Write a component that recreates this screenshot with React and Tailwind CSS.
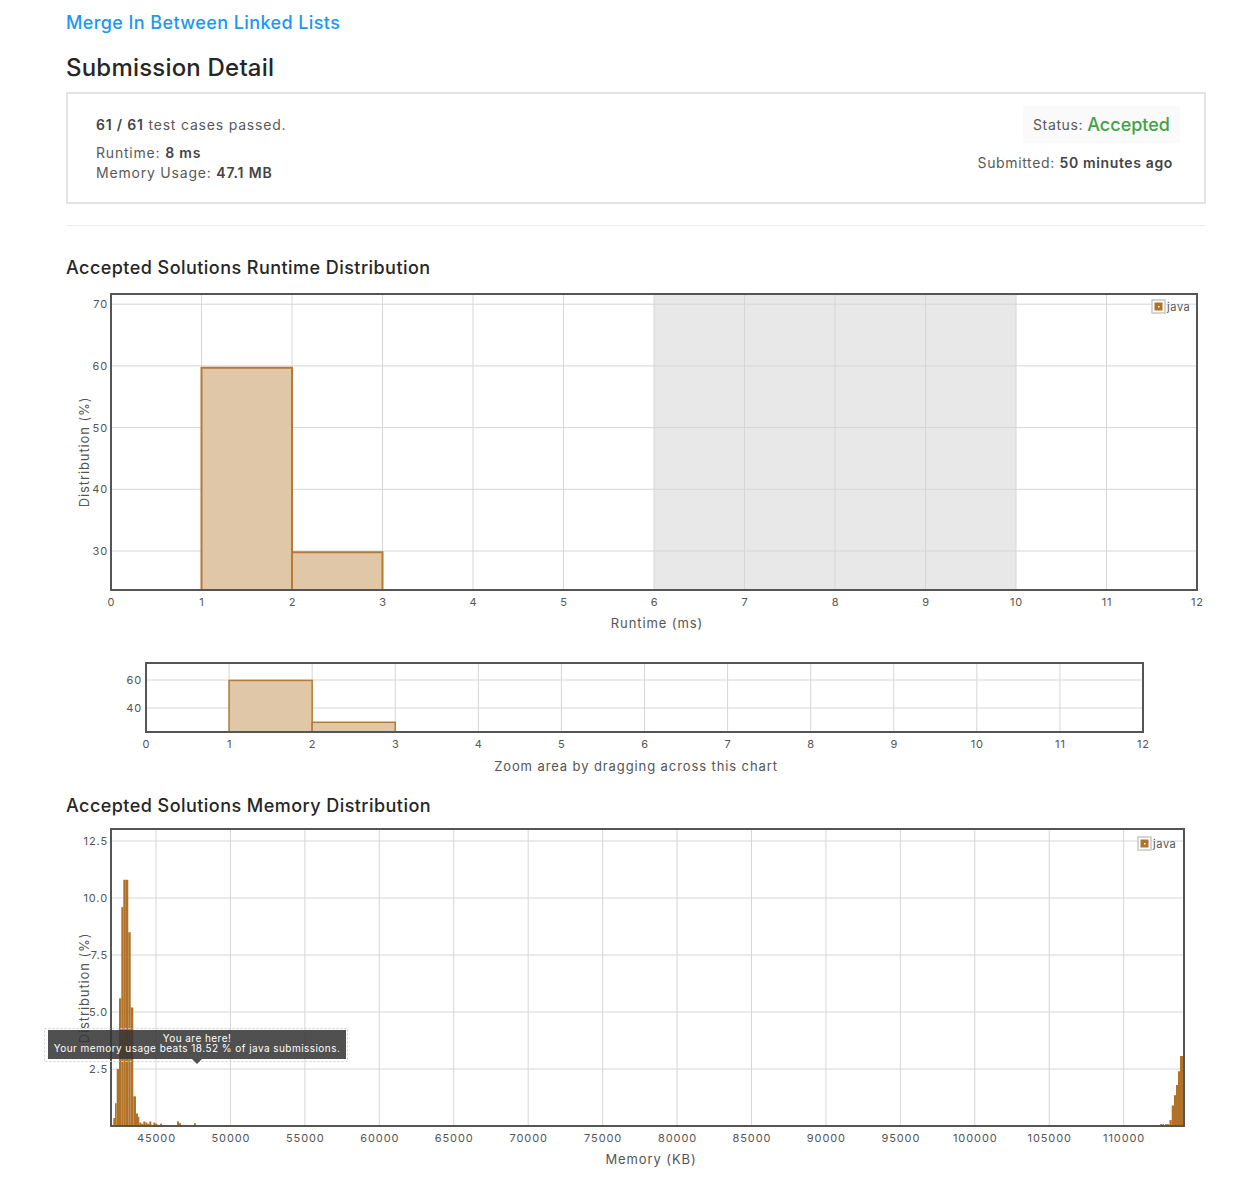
const FONT = "Inter, 'Liberation Sans', sans-serif";
const GRID = "#d6d6d6";
const FRAME = "#555555";
const LABEL = "#555555";
const BROWN = "#b07228";

const tick = { fontSize: 11, fill: LABEL, fontFamily: FONT, letterSpacing: 0.9 };
const axis = { fontSize: 13, fill: LABEL, fontFamily: FONT, letterSpacing: 0.9 };

function Legend({ x, y }) {
  return (
    <g>
      <rect x={x} y={y} width={13} height={13} fill="#fff" stroke="#c8c8c8" strokeWidth={1.5} />
      <rect x={x + 2.5} y={y + 2.5} width={8} height={8} fill={BROWN} />
      <rect x={x + 6} y={y + 6} width={1.5} height={1.5} fill="#fff" />
      <text x={x + 15} y={y + 10.5} {...tick} letterSpacing={0.6}>java</text>
    </g>
  );
}

function RuntimeChart() {
  const X0 = 111, X1 = 1197, Y0 = 294, Y1 = 590;
  const xs = (v) => X0 + v * ((X1 - X0) / 12);
  const ys = (v) => 551 - (v - 30) * 6.17;
  const bars = [[1, 2, 59.7], [2, 3, 29.8]];
  return (
    <svg width={1140} height={360} viewBox="66 280 1140 360" overflow="visible" className="block">
      <rect x={xs(6)} y={Y0} width={xs(10) - xs(6)} height={Y1 - Y0} fill="#e8e8e8" />
      {[30, 40, 50, 60, 70].map((v) => (
        <line key={v} x1={X0} x2={X1} y1={ys(v)} y2={ys(v)} stroke={GRID} />
      ))}
      {Array.from({ length: 11 }, (_, i) => i + 1).map((v) => (
        <line key={v} x1={xs(v)} x2={xs(v)} y1={Y0} y2={Y1} stroke={GRID} />
      ))}
      {bars.map(([a, b, h]) => (
        <rect key={a} x={xs(a)} y={ys(h)} width={xs(b) - xs(a)} height={Y1 - ys(h)} fill="#e0c7a8" stroke="#b87a33" strokeWidth={2} />
      ))}
      <rect x={X0} y={Y0} width={X1 - X0} height={Y1 - Y0} fill="none" stroke={FRAME} strokeWidth={2} />
      {[30, 40, 50, 60, 70].map((v) => (
        <text key={v} x={108} y={ys(v) + 4} textAnchor="end" {...tick}>{v}</text>
      ))}
      {Array.from({ length: 13 }, (_, i) => i).map((v) => (
        <text key={v} x={xs(v) + 0.5} y={606} textAnchor="middle" {...tick}>{v}</text>
      ))}
      <text x={657} y={628} textAnchor="middle" {...axis}>Runtime (ms)</text>
      <text transform="translate(89 452) rotate(-90)" textAnchor="middle" {...axis}>Distribution (%)</text>
      <Legend x={1152} y={300} />
    </svg>
  );
}

function NavigatorChart() {
  const X0 = 146, X1 = 1143, Y0 = 663, Y1 = 732;
  const xs = (v) => X0 + v * ((X1 - X0) / 12);
  const ys = (v) => 680 - (v - 60) * 1.4;
  const bars = [[1, 2, 59.7], [2, 3, 29.8]];
  return (
    <svg width={1140} height={154} viewBox="66 640 1140 154" overflow="visible" className="block">
      {[40, 60].map((v) => (
        <line key={v} x1={X0} x2={X1} y1={ys(v)} y2={ys(v)} stroke={GRID} />
      ))}
      {Array.from({ length: 11 }, (_, i) => i + 1).map((v) => (
        <line key={v} x1={xs(v)} x2={xs(v)} y1={Y0} y2={Y1} stroke={GRID} />
      ))}
      {bars.map(([a, b, h]) => (
        <rect key={a} x={xs(a)} y={ys(h)} width={xs(b) - xs(a)} height={Y1 - ys(h)} fill="#e0c7a8" stroke="#b87a33" strokeWidth={1.5} />
      ))}
      <rect x={X0} y={Y0} width={X1 - X0} height={Y1 - Y0} fill="none" stroke={FRAME} strokeWidth={2} />
      {[40, 60].map((v) => (
        <text key={v} x={142} y={ys(v) + 4} textAnchor="end" {...tick}>{v}</text>
      ))}
      {Array.from({ length: 13 }, (_, i) => i).map((v) => (
        <text key={v} x={xs(v) + 0.5} y={748} textAnchor="middle" {...tick}>{v}</text>
      ))}
      <text x={636} y={771} textAnchor="middle" {...axis}>Zoom area by dragging across this chart</text>
    </svg>
  );
}

// pixel x, width, value (%)
const MEM_BARS = [
  [113.3, 1.7, 0.35], [115, 1.7, 1.0], [116.7, 2.3, 2.5], [119, 2.3, 5.6], [121.3, 2, 9.6],
  [123.3, 2.5, 10.8], [125.8, 2.5, 10.8], [128.3, 2.4, 8.5], [130.7, 2.6, 5.2], [133.3, 2.7, 1.3],
  [136, 2, 0.55], [138, 1.3, 0.4], [139.3, 2, 0.15], [141.3, 2, 0.1], [143.3, 2, 0.2], [145.3, 2, 0.15],
  [147.3, 2, 0.1], [149.3, 2, 0.2], [151.3, 2, 0.05], [153.3, 2, 0.15], [155.3, 2, 0.1], [157.3, 2, 0.05],
  [160, 2, 0.1], [163, 2, 0.05], [177, 2, 0.2], [179, 2, 0.12], [183, 2, 0.05], [194, 2, 0.12],
  [1160, 4, 0.08], [1165, 4, 0.08], [1169.5, 2.2, 0.26], [1171.7, 2.3, 0.9], [1174, 2, 1.35],
  [1176, 2, 1.8], [1178, 2, 2.4], [1180, 3.3, 3.07],
];

function MemoryChart() {
  const X0 = 111, X1 = 1184, Y0 = 829, Y1 = 1126;
  const xs = (kb) => 156 + (kb - 45000) * 0.014887;
  const ys = (v) => Y1 - v * 22.8;
  const ticks = Array.from({ length: 14 }, (_, i) => 45000 + i * 5000);
  return (
    <svg width={1140} height={362} viewBox="66 818 1140 362" overflow="visible" className="block">
      {[2.5, 5, 7.5, 10, 12.5].map((v) => (
        <line key={v} x1={X0} x2={X1} y1={ys(v)} y2={ys(v)} stroke={GRID} />
      ))}
      {ticks.map((t) => (
        <line key={t} x1={xs(t)} x2={xs(t)} y1={Y0} y2={Y1} stroke={GRID} />
      ))}
      {MEM_BARS.map(([x, w, h], i) => (
        <rect key={i} x={x} y={ys(h)} width={w} height={Y1 - ys(h)} fill={BROWN} />
      ))}
      <rect x={X0} y={Y0} width={X1 - X0} height={Y1 - Y0} fill="none" stroke={FRAME} strokeWidth={2} />
      {[2.5, 5, 7.5, 10, 12.5].map((v) => (
        <text key={v} x={108} y={ys(v) + 4} textAnchor="end" {...tick}>{v.toFixed(1)}</text>
      ))}
      {ticks.map((t) => (
        <text key={t} x={xs(t) + 0.5} y={1142} textAnchor="middle" {...tick}>{t}</text>
      ))}
      <text x={651} y={1164} textAnchor="middle" {...axis}>Memory (KB)</text>
      <text transform="translate(89 988) rotate(-90)" textAnchor="middle" {...axis}>Distribution (%)</text>
      <Legend x={1138} y={837} />
      {/* tooltip */}
      <rect x={44.5} y={1028.5} width={303} height={33} fill="none" stroke="#d0d0d0" strokeDasharray="2 2" />
      <rect x={48} y={1030} width={298} height={29} fill="#333" fillOpacity={0.86} />
      <polygon points="192,1059 202,1059 197,1064" fill="#333" fillOpacity={0.86} />
      <text x={197} y={1042} textAnchor="middle" fontSize={10} fill="#fff" fontFamily={FONT} letterSpacing={0.45}>You are here!</text>
      <text x={197} y={1052} textAnchor="middle" fontSize={10} fill="#fff" fontFamily={FONT} letterSpacing={0.45}>Your memory usage beats 18.52 % of java submissions.</text>
    </svg>
  );
}

export default function App() {
  return (
    <div className="min-h-[1180px] bg-white font-[Inter,'Liberation_Sans',sans-serif]">
      <div className="ml-[66px] w-[1140px]">
        <div className="h-[44px] pt-[11px] text-[18px] leading-[24px] font-medium tracking-[0.4px] text-[#2196f3]">
          Merge In Between Linked Lists
        </div>
        <h3 className="h-[48px] pt-[8px] text-[24px] leading-[32px] font-medium tracking-[0.2px] text-[#262626]">
          Submission Detail
        </h3>
        <div className="h-[112px] border-2 border-[#e3e3e3] pl-[28px] pr-[24px] flex justify-between text-[14px] leading-[20px] text-[#595959]">
          <div className="pt-[21px] tracking-[0.8px]">
            <div>
              <b className="font-semibold text-[#444]">61 / 61</b> test cases passed.
            </div>
            <div className="mt-[8px]">
              Runtime: <b className="font-semibold text-[#444]">8 ms</b>
            </div>
            <div>
              Memory Usage: <b className="font-semibold text-[#444]">47.1 MB</b>
            </div>
          </div>
          <div className="pt-[12px] flex flex-col items-end tracking-[0.64px]">
            <div className="h-[37px] px-[10px] bg-[#fafafa] flex items-center gap-[4px]">
              <span>Status:</span>
              <span className="text-[18px] font-medium tracking-[0px] text-[#43a047]">Accepted</span>
            </div>
            <div className="mt-[10px] pr-[7px]">
              Submitted: <b className="font-semibold text-[#444]">50 minutes ago</b>
            </div>
          </div>
        </div>
        <div className="mt-[21px] border-t border-[#eeeeee]" />
        <h4 className="mt-[30px] h-[24px] text-[18px] leading-[24px] font-medium tracking-[0.45px] text-[#262626]">
          Accepted Solutions Runtime Distribution
        </h4>
        <RuntimeChart />
        <NavigatorChart />
        <h4 className="h-[24px] text-[18px] leading-[24px] font-medium tracking-[0.45px] text-[#262626]">
          Accepted Solutions Memory Distribution
        </h4>
        <MemoryChart />
      </div>
    </div>
  );
}
